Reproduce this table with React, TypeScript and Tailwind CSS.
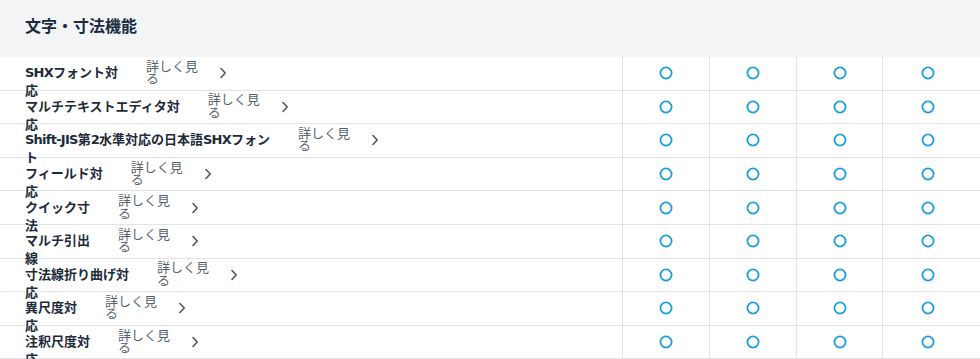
import React from "react";

const rows: [string, string][] = [
  ["SHXフォント対", "応"],
  ["マルチテキストエディタ対", "応"],
  ["Shift-JIS第2水準対応の日本語SHXフォン", "ト"],
  ["フィールド対", "応"],
  ["クイック寸", "法"],
  ["マルチ引出", "線"],
  ["寸法線折り曲げ対", "応"],
  ["異尺度対", "応"],
  ["注釈尺度対", "応"],
];

const font = { fontFamily: '"DejaVu Sans", "Noto Sans CJK JP", sans-serif' };

function Name({ text }: { text: string }) {
  const parts = text.split(/([A-Za-z0-9\-]+)/);
  return (
    <>
      {parts.map((p, i) =>
        /^[A-Za-z0-9\-]+$/.test(p) ? (
          <span key={i} className="tracking-[-0.75px]">
            {p}
          </span>
        ) : (
          <React.Fragment key={i}>{p}</React.Fragment>
        )
      )}
    </>
  );
}

function Ring() {
  return (
    <svg width="14" height="14" viewBox="0 0 14 14" className="block">
      <circle cx="7" cy="7" r="5.6" fill="none" stroke="#1a9fdc" strokeWidth="1.8" />
    </svg>
  );
}

function Chevron() {
  return (
    <svg width="8" height="12" viewBox="0 0 8 12" className="block ml-[21px] shrink-0">
      <path d="M2 1.5 L6.2 6 L2 10.5" fill="none" stroke="#4a5866" strokeWidth="1.6" strokeLinecap="round" strokeLinejoin="round" />
    </svg>
  );
}

export default function App() {
  return (
    <div className="w-[980px] h-[359px] overflow-hidden bg-white" style={font}>
      <div className="h-[57px] bg-[#f3f4f6] flex items-center pl-[25px] pb-[3px]">
        <h2 className="text-[16px] font-bold text-[#1b2d40] leading-[20px]">文字・寸法機能</h2>
      </div>
      {rows.map(([a, b], i) => (
        <div key={i} className="flex h-[33.6px] border-b border-[#dfe4e8]">
          <div className="w-[622px] shrink-0 flex items-center pl-[25px]">
            <div className="h-[18px] text-[13px] leading-[18px] font-bold text-[#1d2b3a] whitespace-nowrap">
              <Name text={a} />
              <br />
              {b}
            </div>
            <a className="ml-[28px] text-[13px] leading-[12.5px] text-[#56626e] whitespace-nowrap cursor-pointer">
              詳しく見
              <br />る
            </a>
            <Chevron />
          </div>
          <div className="w-[87px] shrink-0 border-l border-[#dfe4e8] flex items-center justify-center">
            <Ring />
          </div>
          <div className="w-[87px] shrink-0 border-l border-[#dfe4e8] flex items-center justify-center">
            <Ring />
          </div>
          <div className="w-[86px] shrink-0 border-l border-[#dfe4e8] flex items-center justify-center">
            <Ring />
          </div>
          <div className="w-[91px] shrink-0 border-l border-[#dfe4e8] flex items-center justify-center">
            <Ring />
          </div>
          <div className="flex-1" />
        </div>
      ))}
    </div>
  );
}
